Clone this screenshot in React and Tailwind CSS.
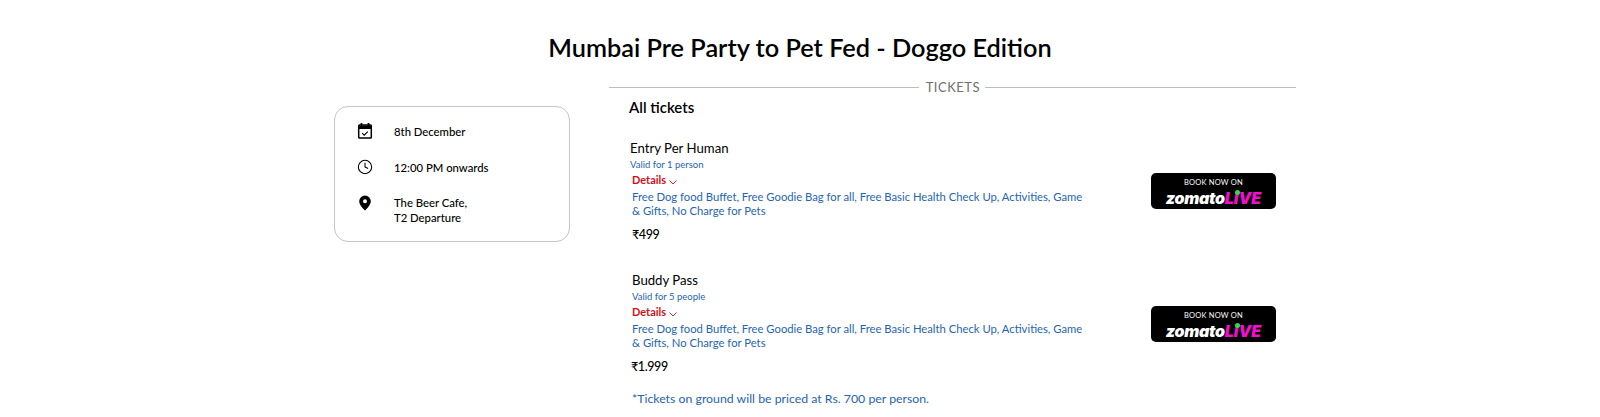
import { Clock } from 'lucide-react'

const perks = 'Free Dog food Buffet, Free Goodie Bag for all, Free Basic Health Check Up, Activities, Game & Gifts, No Charge for Pets'

function CalendarIcon() {
  return (
    <svg width="16" height="16" viewBox="0 0 16 16" fill="none">
      <path d="M4.5 0v3M11.5 0v3" stroke="#000" strokeWidth="1.8" />
      <rect x="1.7" y="2" width="12.6" height="13" rx="0.8" stroke="#000" strokeWidth="1.5" />
      <path d="M1.7 2.5h12.6v3.5H1.7z" fill="#000" />
      <path d="M5.2 10.2l2 2 3.6-3.6" stroke="#000" strokeWidth="1.1" />
    </svg>
  )
}

function PinIcon() {
  return (
    <svg width="16" height="16" viewBox="0 0 16 16">
      <path
        fillRule="evenodd"
        d="M8 0.5a5.8 5.8 0 0 1 5.8 5.8c0 3.6-3.9 7.6-5.8 9.2-1.9-1.6-5.8-5.6-5.8-9.2A5.8 5.8 0 0 1 8 0.5zm0 3.7a2 2 0 1 0 0 4 2 2 0 0 0 0-4z"
        fill="#000"
      />
    </svg>
  )
}

function ZomatoBadge({ className }) {
  return (
    <div className={`flex h-[36px] w-[125px] flex-col items-center rounded-[5px] bg-black pt-[5px] text-white ${className}`}>
      <span className="text-[7.5px] leading-[9px] tracking-[0.2px]">BOOK NOW ON</span>
      <span className="mt-[1px] flex items-baseline font-['Inter',sans-serif] text-[16px] leading-[20px] font-black tracking-[-0.3px] italic">
        zomato
        <span className="relative tracking-[0px] text-[#f00fd0]">
          LIVE
          <span className="absolute top-[2px] left-[10px] h-[5px] w-[5px] rounded-full bg-[#2fe03c]" />
        </span>
      </span>
    </div>
  )
}

function Ticket({ name, valid, price, top, nameIndent, priceGap, priceIndent, badgeClass }) {
  return (
    <div className={`flex items-center ${top}`}>
      <div className="w-[522px]">
        <div className={`text-[13.2px] leading-[18px] text-black ${nameIndent}`}>{name}</div>
        <div className={`mt-[1px] text-[9.5px] leading-[13px] text-[#1f64b0] ${nameIndent}`}>{valid}</div>
        <div className="mt-[1px] ml-[3px] flex items-center gap-[3px] text-[11px] leading-[16px] font-bold text-[#d0101c]">
          Details
          <svg width="8" height="5" viewBox="0 0 8 5" fill="none" className="mt-[4px]">
            <path d="M0.5 0.5L4 4L7.5 0.5" stroke="#d0101c" strokeWidth="0.9" />
          </svg>
        </div>
        <div className="mt-[2px] ml-[3px] w-[460px] text-[11.25px] leading-[14px] text-[#1f64b0]">{perks}</div>
        <div className={`text-[12.5px] leading-[18px] font-medium tracking-[-0.4px] text-black ${priceGap} ${priceIndent}`}>{price}</div>
      </div>
      <ZomatoBadge className={badgeClass} />
    </div>
  )
}

export default function App() {
  return (
    <div className="h-[417px] overflow-hidden bg-white font-['Lato','Noto_Sans',sans-serif]">
      <h1 className="pt-[31px] text-center text-[25.3px] leading-[33px] font-semibold text-black">
        Mumbai Pre Party to Pet Fed - Doggo Edition
      </h1>
      <div className="mt-[16px] flex pl-[334px]">
        <div className="mt-[26px] mr-[39px] h-[136px] w-[236px] shrink-0 rounded-[14px] border border-[#c4c4c4] pt-[15px] pl-[22px] text-[11.3px] leading-[15px] font-medium text-black">
          <div className="flex h-[18px] items-center">
            <div className="w-[37px]"><CalendarIcon /></div>
            8th December
          </div>
          <div className="mt-[18px] flex h-[18px] items-center">
            <div className="w-[37px]"><Clock size={16} strokeWidth={1.6} /></div>
            12:00 PM onwards
          </div>
          <div className="mt-[19px] flex">
            <div className="w-[37px]"><PinIcon /></div>
            <div>The Beer Cafe,<br />T2 Departure</div>
          </div>
        </div>
        <div className="w-[687px] shrink-0">
          <div className="flex items-center text-[13px] leading-[14px] tracking-[0.5px] text-[#707070]">
            <div className="mr-[7px] h-px flex-1 bg-[#bdbdbd]" />
            TICKETS
            <div className="ml-[5px] h-px w-[311px] bg-[#bdbdbd]" />
          </div>
          <div className="mt-[2px] pl-[20px]">
            <div className="text-[15px] leading-[22px] font-semibold text-black">All tickets</div>
            <Ticket name="Entry Per Human" valid="Valid for 1 person" price="₹499" top="mt-[21px]" nameIndent="ml-[1px]" priceGap="mt-[8px]" priceIndent="ml-[3px]" badgeClass="mb-[2px]" />
            <Ticket name="Buddy Pass" valid="Valid for 5 people" price="₹1.999" top="mt-[27px]" nameIndent="ml-[3px]" priceGap="mt-[8px]" priceIndent="ml-[2px]" badgeClass="" />
            <div className="mt-[14px] ml-[3px] text-[12.3px] leading-[18px] text-[#1f64b0]">
              *Tickets on ground will be priced at Rs. 700 per person.
            </div>
          </div>
        </div>
      </div>
    </div>
  )
}
